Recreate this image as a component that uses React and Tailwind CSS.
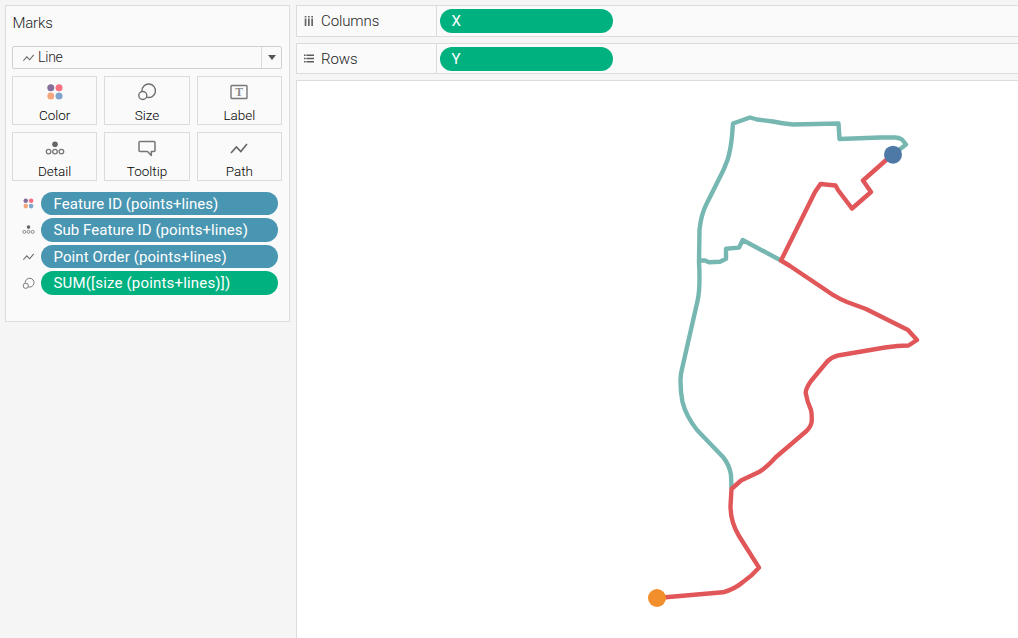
const MARKS = [
  { name: "Color", Icon: ColorIcon },
  { name: "Size", Icon: SizeIcon },
  { name: "Label", Icon: LabelIcon },
  { name: "Detail", Icon: DetailIcon },
  { name: "Tooltip", Icon: TooltipIcon },
  { name: "Path", Icon: PathIcon },
];

const FIELDS = [
  { name: "Feature ID (points+lines)", Icon: ColorIcon, color: "bg-[#4996b2]", track: "tracking-[0.06px]" },
  { name: "Sub Feature ID (points+lines)", Icon: DetailIcon, color: "bg-[#4996b2]", track: "tracking-[0.06px]" },
  { name: "Point Order (points+lines)", Icon: PathIcon, color: "bg-[#4996b2]", track: "tracking-[0.1px]" },
  { name: "SUM([size (points+lines)])", Icon: SizeIcon, color: "bg-[#00b180]", track: "tracking-[0.18px]" },
];

function ColorIcon({ className }) {
  return (
    <svg viewBox="0 0 20 20" className={className}>
      <circle cx="5.8" cy="5.8" r="3.5" fill="#876f9b" />
      <circle cx="14" cy="5.8" r="3.5" fill="#fa6f7f" />
      <circle cx="5.8" cy="14" r="3.5" fill="#f4a77d" />
      <circle cx="14" cy="14" r="3.5" fill="#80a5cd" />
    </svg>
  );
}

function SizeIcon({ className }) {
  return (
    <svg viewBox="0 0 20 20" className={className} fill="none" stroke="#6e6e6e" strokeWidth="1.4">
      <path d="M4.9 9.1A6.800 6.800 0 1 1 9.600 15.200" />
      <circle cx="5.800" cy="13.500" r="4" />
    </svg>
  );
}

function LabelIcon({ className }) {
  return (
    <svg viewBox="0 0 20 20" className={className}>
      <rect x="2" y="3.5" width="16" height="13" rx="0.8" fill="none" stroke="#777" strokeWidth="1.4" />
      <text x="10" y="13.800" textAnchor="middle" fontFamily="Liberation Serif, serif" fontSize="11.500" fontWeight="700" fill="#888">T</text>
    </svg>
  );
}

function DetailIcon({ className }) {
  return (
    <svg viewBox="0 0 20 20" className={className} fill="none" stroke="#777" strokeWidth="1.3">
      <circle cx="10" cy="6.3" r="2.8" fill="#666" stroke="none" />
      <circle cx="3.600" cy="13.600" r="2.300" />
      <circle cx="10" cy="13.600" r="2.300" />
      <circle cx="16.400" cy="13.600" r="2.300" />
    </svg>
  );
}

function TooltipIcon({ className }) {
  return (
    <svg viewBox="0 0 20 20" className={className} fill="none" stroke="#777" strokeWidth="1.5" strokeLinejoin="round">
      <path d="M3 3.500H17Q18 3.500 18 4.500V12.500Q18 13.500 17 13.500H14.300V17.500L10.500 13.500H3Q2 13.500 2 12.500V4.500Q2 3.500 3 3.500Z" />
    </svg>
  );
}

function PathIcon({ className }) {
  return (
    <svg viewBox="0 0 20 20" className={className} fill="none" stroke="#666" strokeWidth="1.6">
      <path d="M2 15L7.400 9L11.800 13.500L18 6" />
    </svg>
  );
}

function ColumnsIcon() {
  return (
    <svg viewBox="0 0 10 10" className="h-[10px] w-[10px]" fill="#666">
      <path d="M.7 0h1.700v1.600H.7zM4 0h1.700v1.600H4zM7.300 0h1.700v1.600H7.300zM.7 2.400h1.700V10H.7zM4 2.400h1.700V10H4zM7.300 2.400h1.700V10H7.300z" />
    </svg>
  );
}

function RowsIcon() {
  return (
    <svg viewBox="0 0 10 10" className="h-[10px] w-[10px]" fill="#5c5c5c">
      <path d="M0 .6h1.600v1.500H0zM0 3.800h1.600v1.500H0zM0 7h1.600v1.500H0zM2.400 .6H10v1.500H2.400zM2.400 3.800H10v1.500H2.400zM2.400 7H10v1.500H2.400z" />
    </svg>
  );
}

function Shelf({ label, Icon, field, height }) {
  return (
    <div className={`flex border border-r-0 border-[#dcdcdc] bg-[#fafafa] ${height}`}>
      <div className="flex w-[140px] items-center border-r border-[#dcdcdc] pl-[7px]">
        <Icon />
        <span className="ml-[7px] pt-px text-[15px] font-light tracking-[-0.1px] text-[#222]">{label}</span>
      </div>
      <div className="flex items-center pl-[2.500px]">
        <div className="flex h-6 w-[173.500px] items-center rounded-full bg-[#00b180] pt-px pl-[12px] text-[15px] text-white">
          {field}
        </div>
      </div>
    </div>
  );
}

function RouteChart() {
  return (
    <svg viewBox="297 81 721 557" className="block h-[557px] w-[721px]" fill="none" strokeWidth="4.4" strokeLinejoin="round">
      <g stroke="#76b7b2">
        <path d="M893 154.500L906 144.500L902 139.500Q899 137.500 895 137.500H880L839.500 139L838.500 123.500L793 124.500Q782 123.500 773 121.500L757 119.500L750 117.500L733 123.500L732 136Q730.500 151 727.500 160Q724 170 718 181L706 205Q701 215 699.500 230L699 262Q700.500 288 697.500 301L682 369Q680.500 374 680.500 381Q680.500 392 682.500 402Q686 416 697 430L723 457Q729.500 465 731 475L731.500 489" />
        <path d="M699 260.500H705L709 262.300L720 261.700L726 258.700V248.700L739 247.600L742.700 240L781 260.500" />
      </g>
      <path stroke="#e15759" d="M893 154L863 180.500L871 192L852 208.500L838 190L835.500 185.500L820.500 184L815 192L781 260.500L790 266L832 294.300Q840 299 847 302L866 309L908 330L917 340L908.500 345.500Q898 345.500 885 347.500L838 355.500Q831 357 826 363L811 381Q805.500 389 805.700 393Q807 401 811 410Q812 414 811.700 421Q811.500 426 806.500 431L776 457Q766 468 759 472L741 480.500L731.500 489L730.500 506Q730.500 522 739 536L759 567.700Q752 576 743 582Q735 589 723 592.300L657 598" />
      <circle cx="893" cy="154.700" r="9" fill="#4e79a7" />
      <circle cx="657" cy="598" r="9" fill="#f28e2b" />
    </svg>
  );
}

export default function App() {
  return (
    <div className="flex h-[638px] w-[1018px] overflow-hidden bg-[#f5f5f5] pt-[5px] font-[Roboto,sans-serif]">
      <aside className="ml-[5px] flex h-[317px] w-[285px] shrink-0 flex-col border border-[#dcdcdc] bg-[#fafafa] pr-[7px] pl-[6px]">
        <h2 className="mt-[7px] h-[21px] pl-[0.500px] text-[15px] leading-[21px] font-light tracking-[-0.2px] text-[#222]">Marks</h2>
        <div className="mt-3 flex h-[23px] items-center rounded-[2px] border border-[#d0d0d0] pl-[9px]">
          <PathIcon className="h-[13px] w-[13px]" />
          <span className="ml-[3px] grow text-[14px] font-light tracking-[-0.2px] text-[#222]">Line</span>
          <span className="flex h-full w-[20px] items-center justify-center border-l border-[#dcdcdc]">
            <svg viewBox="0 0 8 5" className="h-[5px] w-2" fill="#555"><path d="M0 0H8L4 5Z" /></svg>
          </span>
        </div>
        <div className="mt-[7px] grid grid-cols-3 gap-[7px]">
          {MARKS.map(({ name, Icon }) => (
            <div key={name} className="flex h-[49px] flex-col items-center border border-[#dcdcdc] pt-[5px]">
              <Icon className="h-5 w-5 shrink-0" />
              <span className="mt-[3px] text-[13.500px] leading-[20px] font-light text-black">{name}</span>
            </div>
          ))}
        </div>
        <div className="mt-[10.500px] flex flex-col gap-[3px] pr-[4.500px] pl-[10px]">
          {FIELDS.map(({ name, Icon, color, track }) => (
            <div key={name} className="flex items-center gap-[6px]">
              <Icon className="h-[13px] w-[13px] shrink-0" />
              <div className={`flex h-[23.600px] grow items-center rounded-full pt-px pl-[12.500px] text-[15px] whitespace-nowrap text-white ${color} ${track}`}>
                {name}
              </div>
            </div>
          ))}
        </div>
      </aside>
      <main className="ml-[6px] flex w-[722px] shrink-0 flex-col gap-[6px]">
        <Shelf label="Columns" Icon={ColumnsIcon} field="X" height="h-8" />
        <Shelf label="Rows" Icon={RowsIcon} field="Y" height="h-[31px]" />
        <div className="grow border-t border-l border-[#dcdcdc] bg-white">
          <RouteChart />
        </div>
      </main>
    </div>
  );
}
